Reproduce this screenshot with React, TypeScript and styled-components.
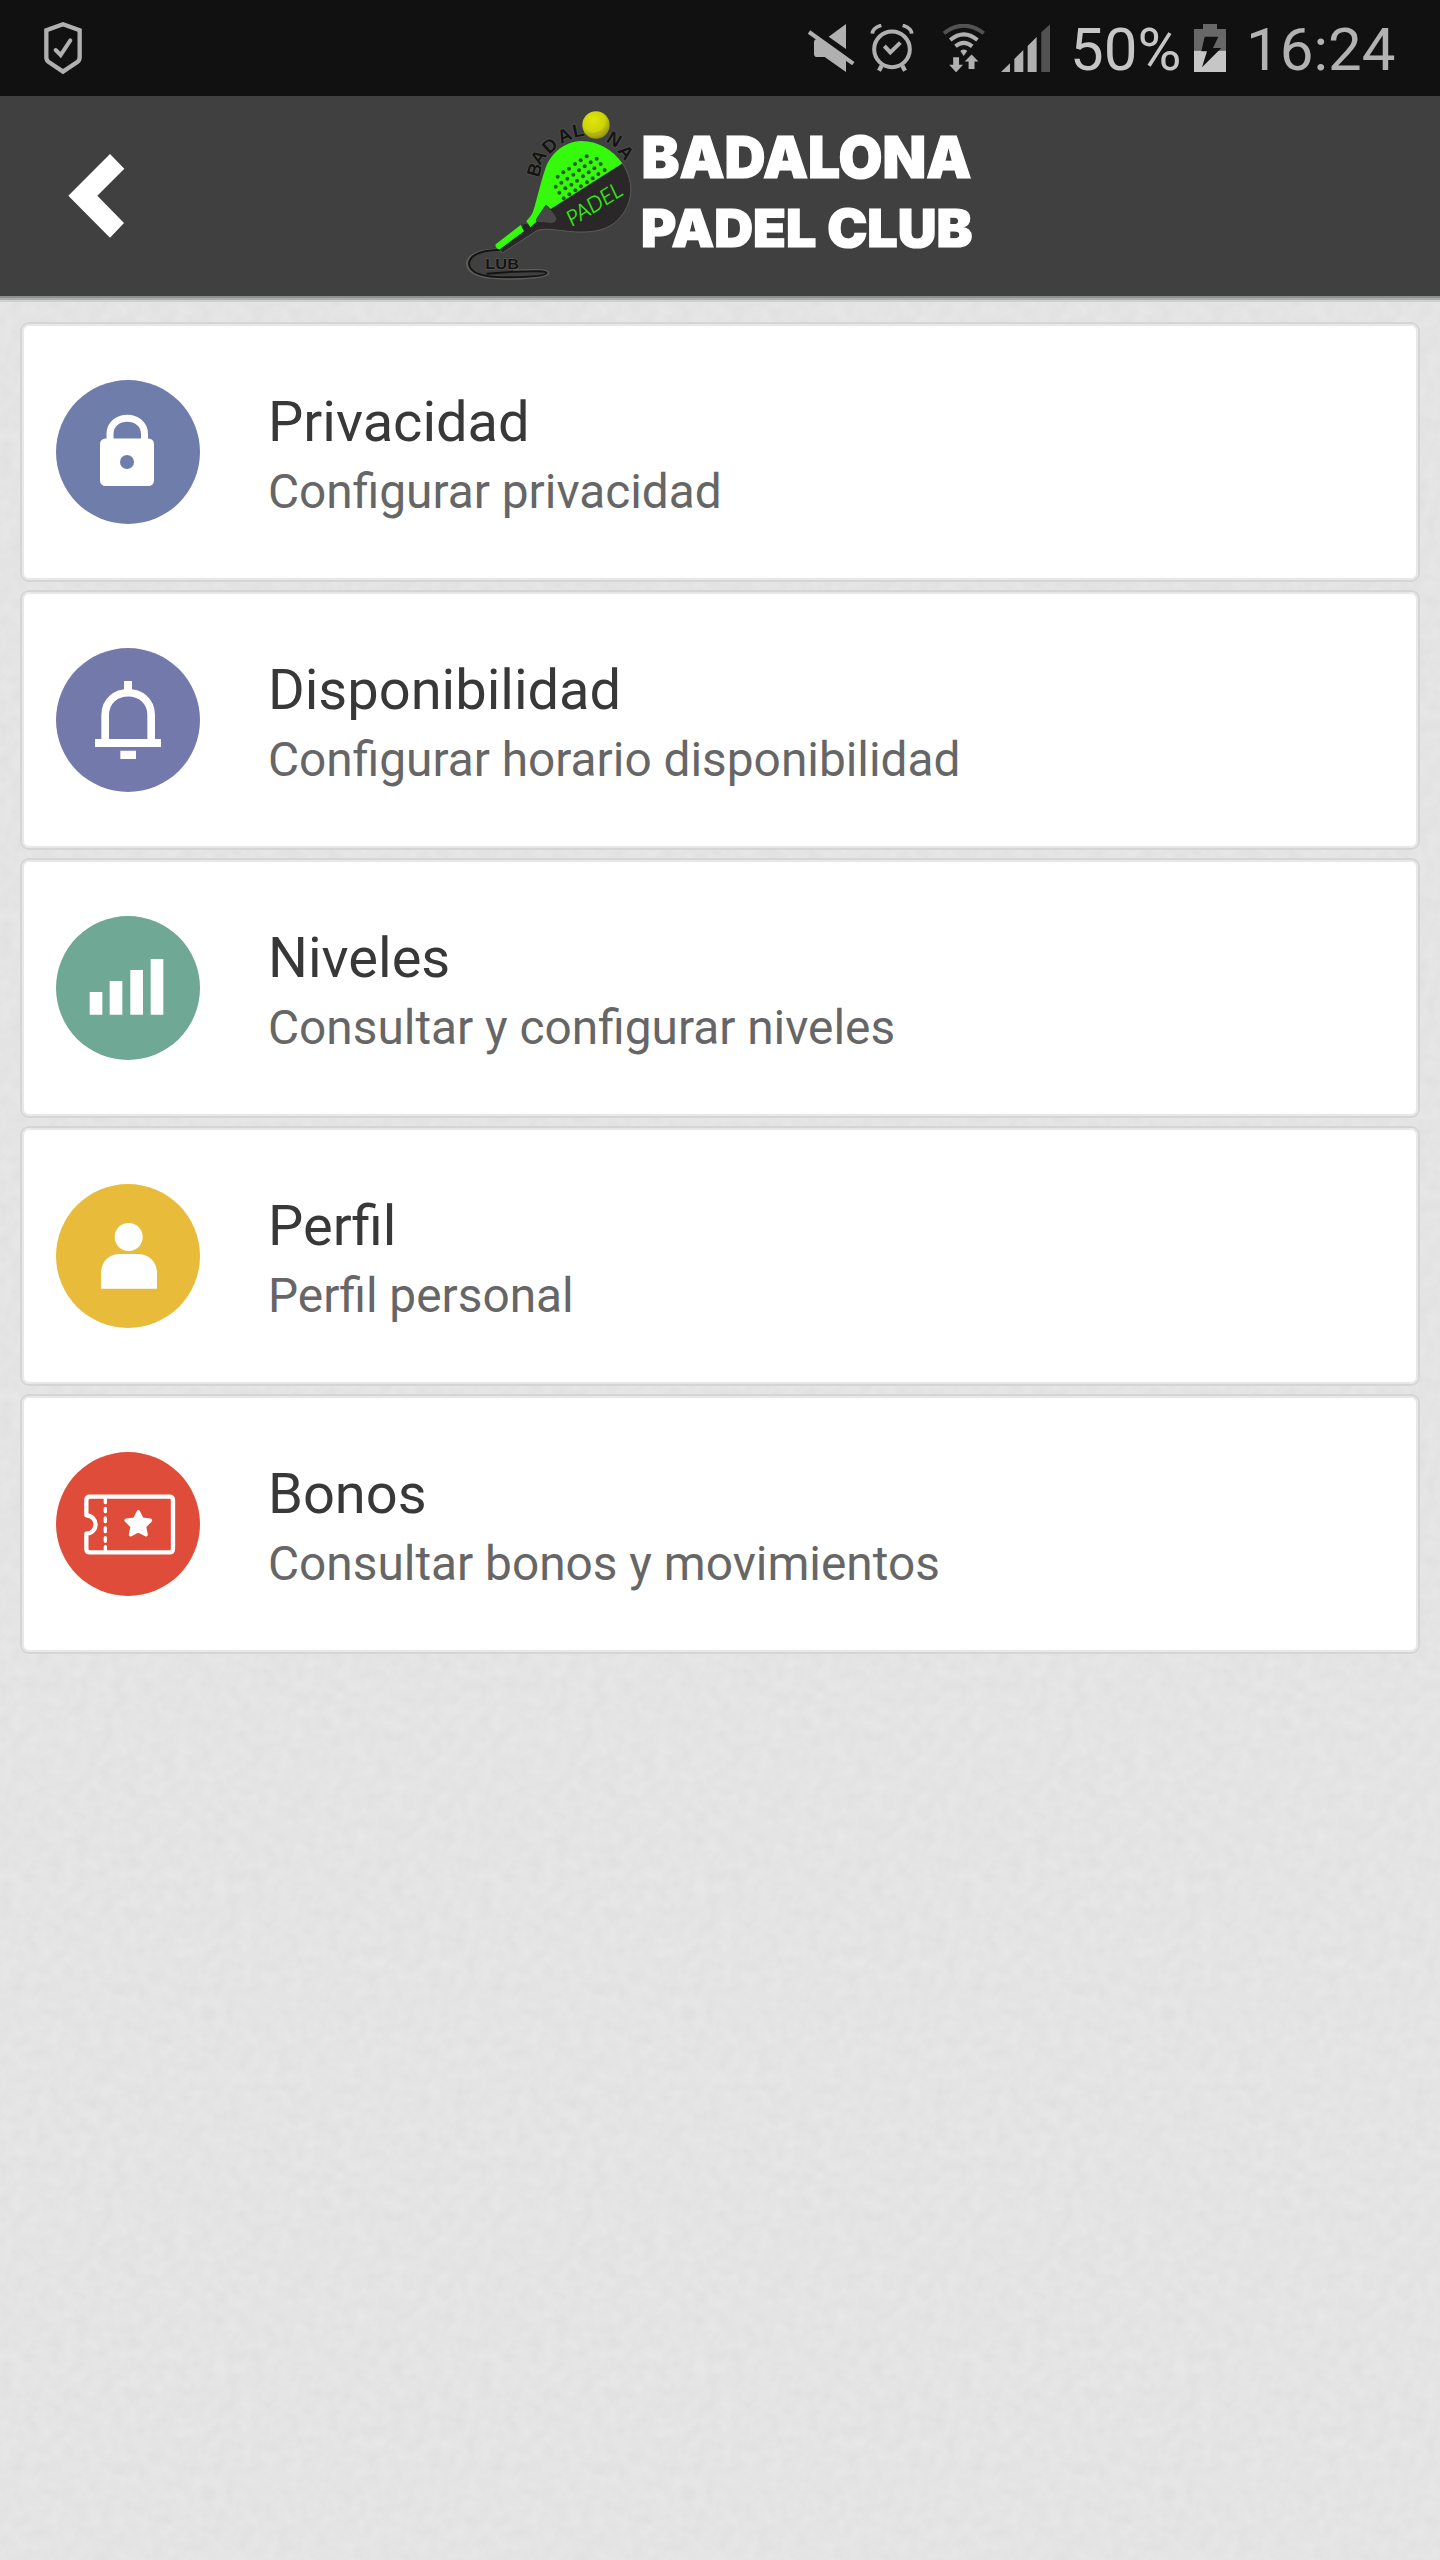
import React from "react";
import styled, { createGlobalStyle } from "styled-components";

const GlobalStyle = createGlobalStyle`
  body {
    margin: 0;
    background: #e4e4e4;
    font-family: Roboto, "Noto Sans", sans-serif;
  }
`;

const paper =
  "data:image/svg+xml," +
  encodeURIComponent(
    `<svg xmlns="http://www.w3.org/2000/svg" width="480" height="480"><filter id="n" x="0" y="0" width="100%" height="100%" color-interpolation-filters="sRGB"><feTurbulence type="fractalNoise" baseFrequency="0.08" numOctaves="3" stitchTiles="stitch"/><feColorMatrix type="matrix" values="0.04 0 0 0 0.874 0.04 0 0 0 0.874 0.04 0 0 0 0.874 0 0 0 0 1"/></filter><rect width="480" height="480" filter="url(#n)"/></svg>`
  );

const Screen = styled.div`
  display: flex;
  flex-direction: column;
  width: 1440px;
  height: 2560px;
  overflow: hidden;
  background: #e4e4e4 url("${paper}");
`;

const StatusBar = styled.div`
  display: flex;
  align-items: center;
  box-sizing: border-box;
  height: 96px;
  padding: 0 43px 0 44px;
  background: #111;
`;

const Spacer = styled.div`
  flex: 1;
`;

const StatusIcon = styled.svg<{ $w: number; $gap: number }>`
  flex: none;
  width: ${(p) => p.$w}px;
  height: 48px;
  margin-right: ${(p) => p.$gap}px;
`;

const StatusText = styled.span<{ $w: number; $tone: string }>`
  width: ${(p) => p.$w}px;
  font-size: 60px;
  line-height: 70px;
  padding-top: 3px;
  white-space: nowrap;
  color: ${(p) => p.$tone};
`;

const Header = styled.header`
  display: grid;
  grid-template-columns: 460px 520px 460px;
  align-items: center;
  height: 200px;
  background: #404040;
  box-shadow: 0 2px 0 #8e9090, 0 4px 0 #abadac, 0 6px 0 #cdd0cf;
`;

const BackButton = styled.button`
  display: flex;
  width: 200px;
  height: 200px;
  padding: 58px 0 0 68px;
  border: 0;
  background: none;
`;

const Logo = styled.svg`
  display: block;
  width: 520px;
  height: 200px;
  overflow: visible;
`;

const Menu = styled.main`
  display: flex;
  flex-direction: column;
  gap: 8px;
  padding: 26px 20px 0;
`;

const Card = styled.section`
  display: flex;
  align-items: center;
  box-sizing: border-box;
  height: 260px;
  padding-left: 32px;
  border: 2px solid #d5d5d5;
  border-radius: 9px;
  background: #fff;
  box-shadow: inset 0 0 0 2px #e8e8e8;
`;

const Badge = styled.svg<{ $color: string }>`
  flex: none;
  width: 144px;
  height: 144px;
  margin: 0 68px 0 2px;
  border-radius: 50%;
  background: ${(p) => p.$color};
`;

const Labels = styled.div`
  display: flex;
  flex-direction: column;
  padding-top: 9px;
`;

const Title = styled.h2`
  margin: 0;
  font-size: 56px;
  font-weight: 400;
  line-height: 70px;
  color: #383838;
`;

const Subtitle = styled.p`
  margin: 0;
  font-size: 47.800px;
  line-height: 70px;
  color: #666;
`;

const holes: [number, number][] = [
  [410, 199], [440, 206], [375, 222], [392, 211], [452, 222], [422, 217], [464, 240],
  [340, 247], [357, 236], [323, 260], [387, 241], [404, 229], [433, 235], [445, 252],
  [334, 278], [352, 266], [370, 254], [399, 259], [416, 247], [317, 290], [428, 265],
  [346, 295], [364, 284], [381, 272], [411, 277], [328, 308], [393, 289], [358, 313],
  [376, 301], [341, 325],
];

const arc: [string, number, number, number][] = [
  ["B", 266, 264, -74], ["A", 270, 229, -57], ["D", 297, 194, -42], ["A", 333, 162, -25],
  ["L", 372, 143, -12], ["N", 466, 154, 31], ["A", 500, 183, 51],
];

function ClubLogo() {
  return (
    <Logo viewBox="460 96 520 200">
      <g transform="translate(450 90) scale(0.33333)">
        <g
          fontFamily='"Liberation Sans", Arial, sans-serif'
          fontWeight="700"
          fontSize="56"
          fill="#141414"
          stroke="#55554f"
          strokeWidth="4"
          style={{ paintOrder: "stroke" }}
        >
          {arc.map(([ch, x, y, r], i) => (
            <text key={i} transform={`translate(${x} ${y}) rotate(${r})`}>{ch}</text>
          ))}
        </g>
        <path
          d="M160 480 C110 478 52 488 52 522 C54 555 110 566 180 565 C240 564 294 560 294 549 C292 538 240 541 190 542"
          fill="none" stroke="#5f5f59" strokeWidth="8"
        />
        <path
          d="M160 480 C110 478 57 490 57 522 C59 552 110 563 180 562 C240 561 290 558 290 549 C288 541 240 544 190 545 L110 551"
          fill="none" stroke="#141414" strokeWidth="6"
        />
        <text
          x="106" y="537"
          fontFamily='"Liberation Sans", Arial, sans-serif'
          fontWeight="700" fontSize="46" fill="#141414"
          stroke="#5f5f59" strokeWidth="3" style={{ paintOrder: "stroke" }}
          textLength="101" lengthAdjust="spacingAndGlyphs"
        >
          LUB
        </text>
        <path
          d="M517 220 C558 282 546 345 505 388 C475 420 432 427 385 426 C335 424 290 412 262 421 L157 489 L140 466 L230 400 L300 358 Z"
          fill="#292727" stroke="#6c6c66" strokeWidth="2"
        />
        <path
          d="M517 220 C488 178 440 152 393 153 C340 156 305 190 288 230 C272 275 262 325 250 362 C245 376 238 384 229 393 L241 412 L262 393 L300 358 Z"
          fill="#35fa0c"
        />
        <path d="M137 463 L212 405 L222 424 L150 477 C142 480 135 471 137 463 Z" fill="#35fa0c" />
        <path d="M216 404 L227 401 L240 420 L227 424 Z" fill="#252525" />
        <path d="M288 345 C300 354 313 370 319 382 C322 393 315 400 302 400 L263 397 C257 394 259 388 263 382 C270 370 280 358 288 345 Z" fill="#494747" stroke="#242424" strokeWidth="2" />
        {holes.map(([x, y], i) => (
          <circle key={i} cx={x} cy={y} r="6" fill="#295b24" />
        ))}
        <text
          transform="translate(366 410) rotate(-32)"
          fontFamily="Lato, sans-serif" fontStyle="italic" fontWeight="300" fontSize="64" fill="#35fa0c"
          stroke="#35fa0c" strokeWidth="1"
          textLength="184" lengthAdjust="spacingAndGlyphs"
        >
          PADEL
        </text>
        <defs>
          <radialGradient id="ball" cx="40%" cy="32%" r="70%">
            <stop offset="0" stopColor="#e2e60a" />
            <stop offset="0.6" stopColor="#ccd308" />
            <stop offset="1" stopColor="#8e940c" />
          </radialGradient>
        </defs>
        <circle cx="438" cy="105" r="41" fill="url(#ball)" />
        <path d="M404 127 C424 139 451 131 474 110" fill="none" stroke="#b5ad20" strokeWidth="4" />
      </g>
      <g
        fontFamily='Inter, "Open Sans", sans-serif'
        fontWeight="900"
        fill="#fff"
        stroke="#fff"
        strokeWidth="1.200"
      >
        <text x="641.500" y="177.600" fontSize="58" textLength="330" lengthAdjust="spacingAndGlyphs">BADALONA</text>
        <text x="641" y="247.300" fontSize="52" textLength="331.500" lengthAdjust="spacingAndGlyphs">PADEL CLUB</text>
      </g>
    </Logo>
  );
}

const items: {
  title: string;
  subtitle: string;
  color: string;
  viewBox: string;
  glyph: React.ReactNode;
}[] = [
  {
    title: "Privacidad",
    subtitle: "Configurar privacidad",
    color: "#6f7dab",
    viewBox: "56 380 144 144",
    glyph: (
      <>
        <path d="M110 442 V434 C110 413 144.500 413 144.500 434 V442" fill="none" stroke="#fff" strokeWidth="7" />
        <rect x="100" y="438.500" width="54" height="47.500" rx="5.500" fill="#fff" />
        <circle cx="127" cy="462" r="7" fill="#6f7dab" />
      </>
    ),
  },
  {
    title: "Disponibilidad",
    subtitle: "Configurar horario disponibilidad",
    color: "#7479ac",
    viewBox: "48 54 432 432",
    glyph: (
      <>
        <path d="M252 153 H276 V182 H252 Z M165 327 H363 V351 H165 Z M241 362 H288 V387 H241 Z" fill="#fff" />
        <path d="M195.500 335 V255 C195.500 166 333.500 166 333.500 255 V335" fill="none" stroke="#fff" strokeWidth="23" />
      </>
    ),
  },
  {
    title: "Niveles",
    subtitle: "Consultar y configurar niveles",
    color: "#6fa894",
    viewBox: "48 48 432 432",
    glyph: (
      <path d="M149 276 h38 v68 h-38z M209 243 h38 v101 h-38z M271 210 h38 v134 h-38z M332 177 h38 v167 h-38z" fill="#fff" />
    ),
  },
  {
    title: "Perfil",
    subtitle: "Perfil personal",
    color: "#e8bc3a",
    viewBox: "48 57 432 432",
    glyph: (
      <>
        <circle cx="266" cy="216" r="42" fill="#fff" />
        <path d="M183 371 V324 C183 290 207 267 240 267 H292 C326 267 351 290 351 324 V371 Z" fill="#fff" />
      </>
    ),
  },
  {
    title: "Bonos",
    subtitle: "Consultar bonos y movimientos",
    color: "#e04c3a",
    viewBox: "48 51 432 432",
    glyph: (
      <g fill="none" stroke="#fff" strokeLinejoin="round">
        <path d="M150 185 H388 Q399 185 399 196 V341 Q399 352 388 352 H150 Q139 352 139 341 V296 C176 294 176 243 139 241 V196 Q139 185 150 185 Z" strokeWidth="13" />
        <path d="M196 190 V203 M196 220 V230 M196 249 V260 M196 279 V290 M196 308 V319 M196 335 V348" strokeWidth="10" strokeLinecap="round" />
        <path d="M295 231 L306 253 L331 256 L313 274 L318 299 L295 287 L272 299 L277 274 L259 256 L284 253 Z" fill="#fff" strokeWidth="11" />
      </g>
    ),
  },
];

export default function App() {
  return (
    <Screen>
      <GlobalStyle />
      <StatusBar>
        <StatusIcon $w={38} $gap={0} viewBox="132 72 114 144" overflow="visible">
          <path d="M189 73 L239 91 V172 Q239 181 232 186 L189 215 L146 186 Q139 181 139 172 V91 Z" fill="none" stroke="#b0b0b0" strokeWidth="13" />
          <path d="M167 150 L182 165 L211 121" fill="none" stroke="#b0b0b0" strokeWidth="12" strokeLinecap="round" />
        </StatusIcon>
        <Spacer />
        <StatusIcon $w={48} $gap={15} viewBox="81 72 144 144" fill="#b0b0b0">
          <path d="M198 72 V147 L146 110 Z M104 119 L114 117 L198 174 V216 L134 171 H112 Q102 171 102 161 V126 Z" />
          <path d="M87 96 L220 191" stroke="#b0b0b0" strokeWidth="12" />
        </StatusIcon>
        <StatusIcon $w={44} $gap={28} viewBox="272 72 132 144" fill="none" stroke="#b0b0b0">
          <circle cx="338" cy="148" r="53.500" strokeWidth="12" />
          <path d="M315 138 L333 157 L363 128" strokeWidth="12" />
          <path d="M279 101 Q280 84 306 76 M397 101 Q396 84 370 76" strokeWidth="11" />
          <path d="M307 197 L299 212 M369 197 L377 212" strokeWidth="13" />
        </StatusIcon>
        <StatusIcon $w={44} $gap={14.700} viewBox="485 70 132 146" fill="none" stroke="#b0b0b0">
          <path d="M490 98 Q550 52 611 98" stroke="#525252" strokeWidth="12" />
          <path d="M509 119 Q550 84 592 119" strokeWidth="12" />
          <path d="M525 138 Q550 117 576 138" strokeWidth="12" />
          <path d="M540 152 Q550 143 561 152 L550 167 Z" fill="#b0b0b0" stroke="none" />
          <path d="M518 171 H536 V194 H548 L527 217 L506 194 H518 Z M565 207 H583 V184 H595 L574 163 L553 184 H565 Z" fill="#b0b0b0" stroke="none" />
        </StatusIcon>
        <StatusIcon $w={49.300} $gap={20} viewBox="662 72 148 144" fill="#b0b0b0">
          <path d="M662 216 L689 190 V216 Z M702 216 V177 L729 150 V216 Z M742 216 V138 L769 111 V216 Z" />
          <path d="M783 216 V97 L810 72 V216 Z" fill="#525252" />
        </StatusIcon>
        <StatusText $w={124} $tone="#c6c6c6">50%</StatusText>
        <StatusIcon $w={32} $gap={20} viewBox="432 72 96 144">
          <path d="M459 72 H501 V87 H528 V152 H432 V87 H459 Z" fill="#686868" />
          <path d="M432 152 H528 V216 H432 Z" fill="#c6c6c6" />
          <path d="M464 110 H505 L489 144 H514 L456 202 L471 154 H454 Z" fill="#111" />
        </StatusIcon>
        <StatusText $w={151} $tone="#b2b2b2">16:24</StatusText>
      </StatusBar>
      <Header>
        <BackButton aria-label="Atrás">
          <svg width="57" height="84" viewBox="205 462 171 252">
            <path d="M331 462 L374 506 L293 587 L373 669 L331 713 L206 587 Z" fill="#fff" />
          </svg>
        </BackButton>
        <ClubLogo />
      </Header>
      <Menu>
        {items.map((item) => (
          <Card key={item.title}>
            <Badge $color={item.color} viewBox={item.viewBox}>{item.glyph}</Badge>
            <Labels>
              <Title>{item.title}</Title>
              <Subtitle>{item.subtitle}</Subtitle>
            </Labels>
          </Card>
        ))}
      </Menu>
    </Screen>
  );
}
